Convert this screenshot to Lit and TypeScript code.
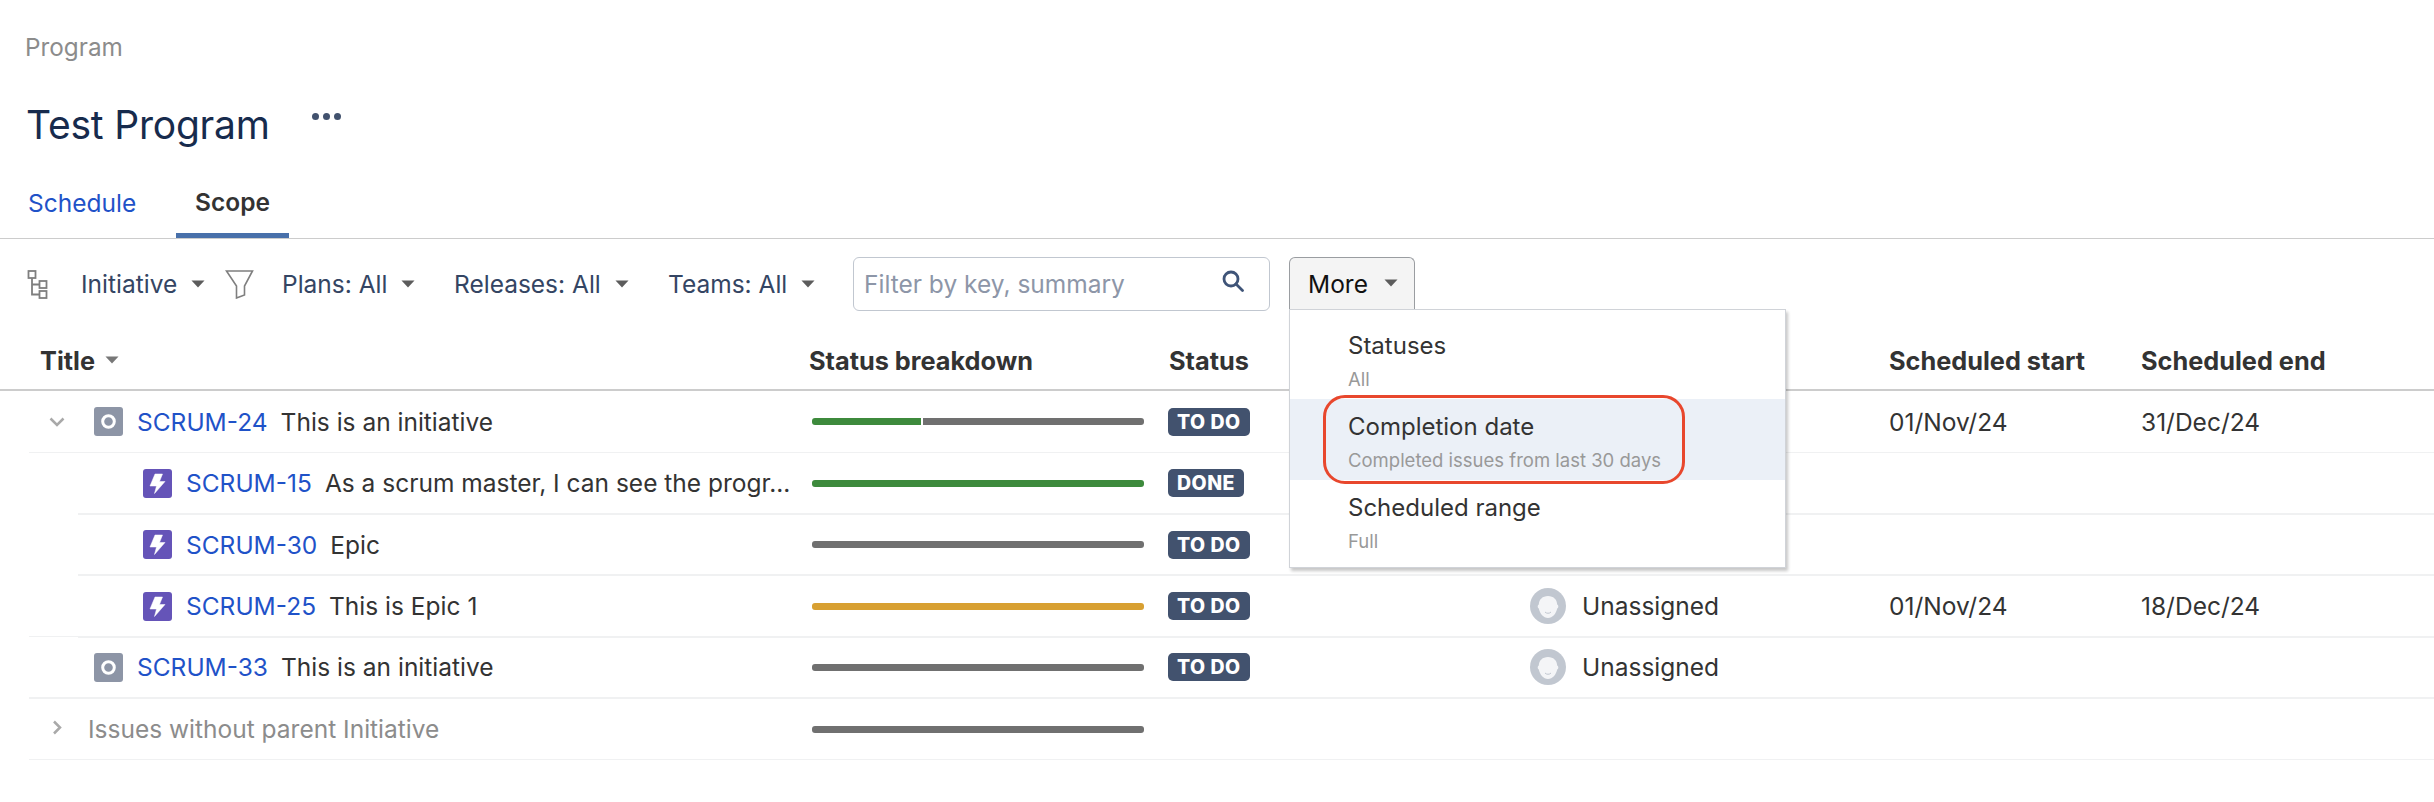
import { LitElement, html, css, svg } from "lit";
import { customElement } from "lit/decorators.js";

const caret = (c = "#5c5c5c") => html`<svg class="caret" width="14" height="8" viewBox="0 0 14 8"><path d="M0.500 0.500h13L7 7.500z" fill=${c}/></svg>`;

const initiativeIcon = html`<svg class="ic" width="29" height="29" viewBox="0 0 29 29"><rect width="29" height="29" rx="3" fill="#8d95a6"/><circle cx="14.500" cy="14.500" r="5.800" fill="none" stroke="#fff" stroke-width="3"/></svg>`;
const epicIcon = html`<svg class="ic" width="29" height="29" viewBox="0 0 29 29"><rect width="29" height="29" rx="3" fill="#6554b8"/><path d="M12 5h7.500l-3 7.500H22L11.500 24.500 13.500 17H7z" fill="#fff" stroke="#fff" stroke-width="0.500" stroke-linejoin="round"/></svg>`;
const avatar = html`<svg class="av" width="36" height="36" viewBox="0 0 36 36"><circle cx="18" cy="18" r="18" fill="#c1c7d0"/><path d="M18 8c5.500 0 9 3.500 9.200 8.500 1.500.6 1.500 3.400 0 4-1 5-4.700 9.500-9.200 9.500s-8.200-4.500-9.200-9.500c-1.500-.6-1.500-3.400 0-4C9 11.500 12.500 8 18 8z" fill="#f4f5f7"/><path d="M15 24c1.500 1.700 4.500 1.700 6 0" fill="none" stroke="#c1c7d0" stroke-width="1"/></svg>`;

type Seg = { c: string; w: string };
const G = "#3d8a3c", K = "#707070", O = "#d8a032";

interface Row {
  indent: number;
  line: string;
  chev?: "down" | "right";
  icon?: "i" | "e";
  key?: string;
  title: string;
  bar: Seg[];
  status?: string;
  assignee?: boolean;
  start?: string;
  end?: string;
  muted?: boolean;
}

const rows: Row[] = [
  { indent: 0, line: "thin h62", chev: "down", icon: "i", key: "SCRUM-24", title: "This is an initiative", bar: [{ c: G, w: "33%" }, { c: K, w: "67%" }], status: "TO DO", start: "01/Nov/24", end: "31/Dec/24" },
  { indent: 1, line: "thick h62", icon: "e", key: "SCRUM-15", title: "As a scrum master, I can see the progr...", bar: [{ c: G, w: "100%" }], status: "DONE" },
  { indent: 1, line: "thick h61", icon: "e", key: "SCRUM-30", title: "Epic", bar: [{ c: K, w: "100%" }], status: "TO DO" },
  { indent: 1, line: "thick h62", icon: "e", key: "SCRUM-25", title: "This is Epic 1", bar: [{ c: O, w: "100%" }], status: "TO DO", assignee: true, start: "01/Nov/24", end: "18/Dec/24" },
  { indent: 0, line: "thick cap", icon: "i", key: "SCRUM-33", title: "This is an initiative", bar: [{ c: K, w: "100%" }], status: "TO DO", assignee: true },
  { indent: 0, line: "thin h61", chev: "right", title: "Issues without parent Initiative", bar: [{ c: K, w: "100%" }], muted: true },
];

@customElement("app-root")
export class AppRoot extends LitElement {
  static styles = css`
    :host {
      display: block;
      position: relative;
      width: 2434px;
      height: 802px;
      overflow: hidden;
      background: #fff;
      font-family: Inter, "Noto Sans", sans-serif;
      font-size: 24.500px;
      color: #333;
    }
    .crumb { padding: 32px 0 0 25px; height: 30px; line-height: 30px; font-size: 24.300px; color: #8c8c8c; }
    .head { display: flex; align-items: center; height: 50px; margin-top: 38px; padding-left: 26px; }
    .head h1 { margin: 0; font-size: 39px; font-weight: 400; color: #172b4d; line-height: 50px; letter-spacing: -0.200px; }
    .dots { display: flex; gap: 4px; margin: -18px 0 0 42px; }
    .dots i { width: 7px; height: 7px; border-radius: 50%; background: #42526e; }
    .tabs { display: flex; height: 68px; margin-top: 20px; border-bottom: 1px solid #ccc; }
    .tab { display: flex; align-items: center; font-size: 24.500px; }
    .tab.sched { color: #1f52c8; margin-left: 28px; width: 148px; height: 66px; }
    .tab.scope { font-weight: 600; color: #333; width: 113px; justify-content: center; border-bottom: 5px solid #4870aa; height: 63px; }
    .filters { display: flex; align-items: center; height: 54px; margin-top: 18px; padding-left: 27px; color: #344563; }
    .filters .f { display: flex; align-items: center; gap: 14px; }
    .w-ini { width: 144px; }
    .w-plan { width: 172px; }
    .w-rel { width: 214px; }
    .w-team { width: 185px; }
    .hier { margin-right: 32px; }
    .fun { margin-right: 28px; }
    .search { display: flex; align-items: center; justify-content: space-between; box-sizing: border-box; width: 417px; height: 54px; padding: 0 25px 0 10px; border: 1px solid #c1c7d0; border-radius: 6px; color: #8d96a8; }
    .search svg { margin-top: -6px; }
    .more { display: flex; align-items: center; gap: 16px; box-sizing: border-box; width: 126px; height: 52px; margin: 0 0 2px 19px; padding-left: 18px; background: #f4f4f4; border: 1px solid #9a9da1; border-bottom: none; border-radius: 6px 6px 0 0; color: #111; }
    .more svg { margin-top: -2px; }
    .thead { display: grid; grid-template-columns: 809px 360px 361px 359px 252px 1fr; align-items: center; height: 58px; padding-top: 12px; margin-top: 8px; border-bottom: 2px solid #ccc; font-weight: 700; font-size: 25.300px; color: #333; }
    .thead .t1 { display: flex; align-items: center; gap: 10px; padding-left: 40px; }
    .row { display: grid; align-items: center; box-sizing: border-box; }
    .row.h62 { height: 62px; }
    .row.h61 { height: 61px; }
    .row.thin { border-bottom: 1px solid #f0f1f2; }
    .row.thick { border-bottom: 2px solid #f0f1f2; }
    .row.cap { height: 63px; margin-top: -2px; border-top: 1px solid #f0f1f2; }
    .row.l0 { margin-left: 29px; grid-template-columns: 780px 359px 362px 359px 252px 1fr; }
    .row.l1 { margin-left: 78px; grid-template-columns: 731px 359px 362px 359px 252px 1fr; }
    .cell { display: flex; align-items: center; white-space: nowrap; min-width: 0; }
    .slot { width: 65px; flex: none; display: flex; justify-content: center; padding-right: 9px; box-sizing: border-box; }
    .slot .r { margin-top: -4px; }
    .key { color: #1f52c8; margin: 0 13px 0 14px; }
    .muted { color: #8c8c8c; margin-left: -6px; }
    .track { display: flex; gap: 2px; width: 332px; height: 7px; margin-left: 3px; border-radius: 3px; overflow: hidden; }
    .track i { display: block; height: 100%; }
    .loz { box-sizing: border-box; height: 28px; line-height: 28px; padding: 0 9px; background: #42526e; color: #fff; font-size: 19.500px; font-weight: 800; border-radius: 5px; letter-spacing: 0.500px; }
    .un { gap: 16px; color: #333; }
    svg { display: block; flex: none; }
    .menu { position: absolute; left: 1289px; top: 309px; width: 497px; height: 259px; box-sizing: border-box; background: #fff; border: 1px solid #d0d3d8; box-shadow: 2px 3px 3px rgba(0, 0, 0, 0.220); display: flex; flex-direction: column; padding-top: 8px; }
    .mi { box-sizing: border-box; height: 81px; padding: 4px 0 0 58px; display: flex; flex-direction: column; justify-content: center; gap: 6px; }
    .mi.on { background: #ebf0f7; }
    .mi b { font-weight: 400; font-size: 24px; line-height: 30px; color: #333; }
    .mi span { font-size: 18.500px; line-height: 24px; color: #999; }
    .ring { position: absolute; left: 1323px; top: 395px; width: 362px; height: 89px; box-sizing: border-box; border: 3px solid #e8472d; border-radius: 22px; }
  `;

  render() {
    return html`
      <div class="crumb">Program</div>
      <div class="head"><h1>Test Program</h1><div class="dots"><i></i><i></i><i></i></div></div>
      <div class="tabs"><div class="tab sched">Schedule</div><div class="tab scope">Scope</div></div>
      <div class="filters">
        <svg class="hier" width="22" height="29" viewBox="0 0 22 29" fill="none" stroke="#7f7f7f" stroke-width="1.800"><rect x="1.500" y="1" width="7" height="7"/><rect x="12.500" y="11" width="7" height="7"/><rect x="12.500" y="21" width="7" height="7"/><path d="M5 8v16.500h7.500M5 14.500h7.500"/></svg>
        <div class="f w-ini">Initiative ${caret()}</div>
        <svg class="fun" width="29" height="29" viewBox="0 0 29 29" fill="none" stroke="#7f7f7f" stroke-width="1.600"><path d="M1.500 1h26L19.500 16v9L11.500 28V16z"/></svg>
        <div class="f w-plan">Plans: All ${caret()}</div>
        <div class="f w-rel">Releases: All ${caret()}</div>
        <div class="f w-team">Teams: All ${caret()}</div>
        <div class="search">Filter by key, summary
          <svg width="22" height="22" viewBox="0 0 22 22" fill="none" stroke="#3f5478" stroke-width="2.800"><circle cx="9" cy="9" r="7"/><path d="M14 14 20.500 20.500" stroke-linecap="round"/></svg>
        </div>
        <div class="more">More ${caret()}</div>
      </div>
      <div class="thead">
        <div class="t1">Title ${caret("#777")}</div>
        <div>Status breakdown</div>
        <div>Status</div>
        <div></div>
        <div>Scheduled start</div>
        <div>Scheduled end</div>
      </div>
      ${rows.map(
        (r) => html`<div class="row ${r.indent ? "l1" : "l0"} ${r.line}">
          <div class="cell t">
            <div class="slot">${r.chev === "down"
              ? svg`<svg width="16" height="10" viewBox="0 0 16 10" fill="none" stroke="#a9a9a9" stroke-width="2.500"><path d="M1.500 1.500 8 8l6.500-6.500"/></svg>`
              : r.chev === "right"
                ? svg`<svg class="r" width="10" height="15" viewBox="0 0 10 15" fill="none" stroke="#a9a9a9" stroke-width="2.500"><path d="M2 1.500 8 7.500l-6 6"/></svg>`
                : ""}</div>
            ${r.icon === "i" ? initiativeIcon : r.icon === "e" ? epicIcon : ""}
            ${r.key ? html`<span class="key">${r.key}</span>` : ""}
            <span class=${r.muted ? "muted" : ""}>${r.title}</span>
          </div>
          <div class="cell"><div class="track">${r.bar.map((s) => html`<i style="background:${s.c};width:${s.w}"></i>`)}</div></div>
          <div class="cell">${r.status ? html`<span class="loz">${r.status}</span>` : ""}</div>
          <div class="cell un">${r.assignee ? html`${avatar}Unassigned` : ""}</div>
          <div class="cell">${r.start ?? ""}</div>
          <div class="cell">${r.end ?? ""}</div>
        </div>`
      )}
      <div class="menu">
        <div class="mi"><b>Statuses</b><span>All</span></div>
        <div class="mi on"><b>Completion date</b><span>Completed issues from last 30 days</span></div>
        <div class="mi"><b>Scheduled range</b><span>Full</span></div>
      </div>
      <div class="ring"></div>
    `;
  }
}
